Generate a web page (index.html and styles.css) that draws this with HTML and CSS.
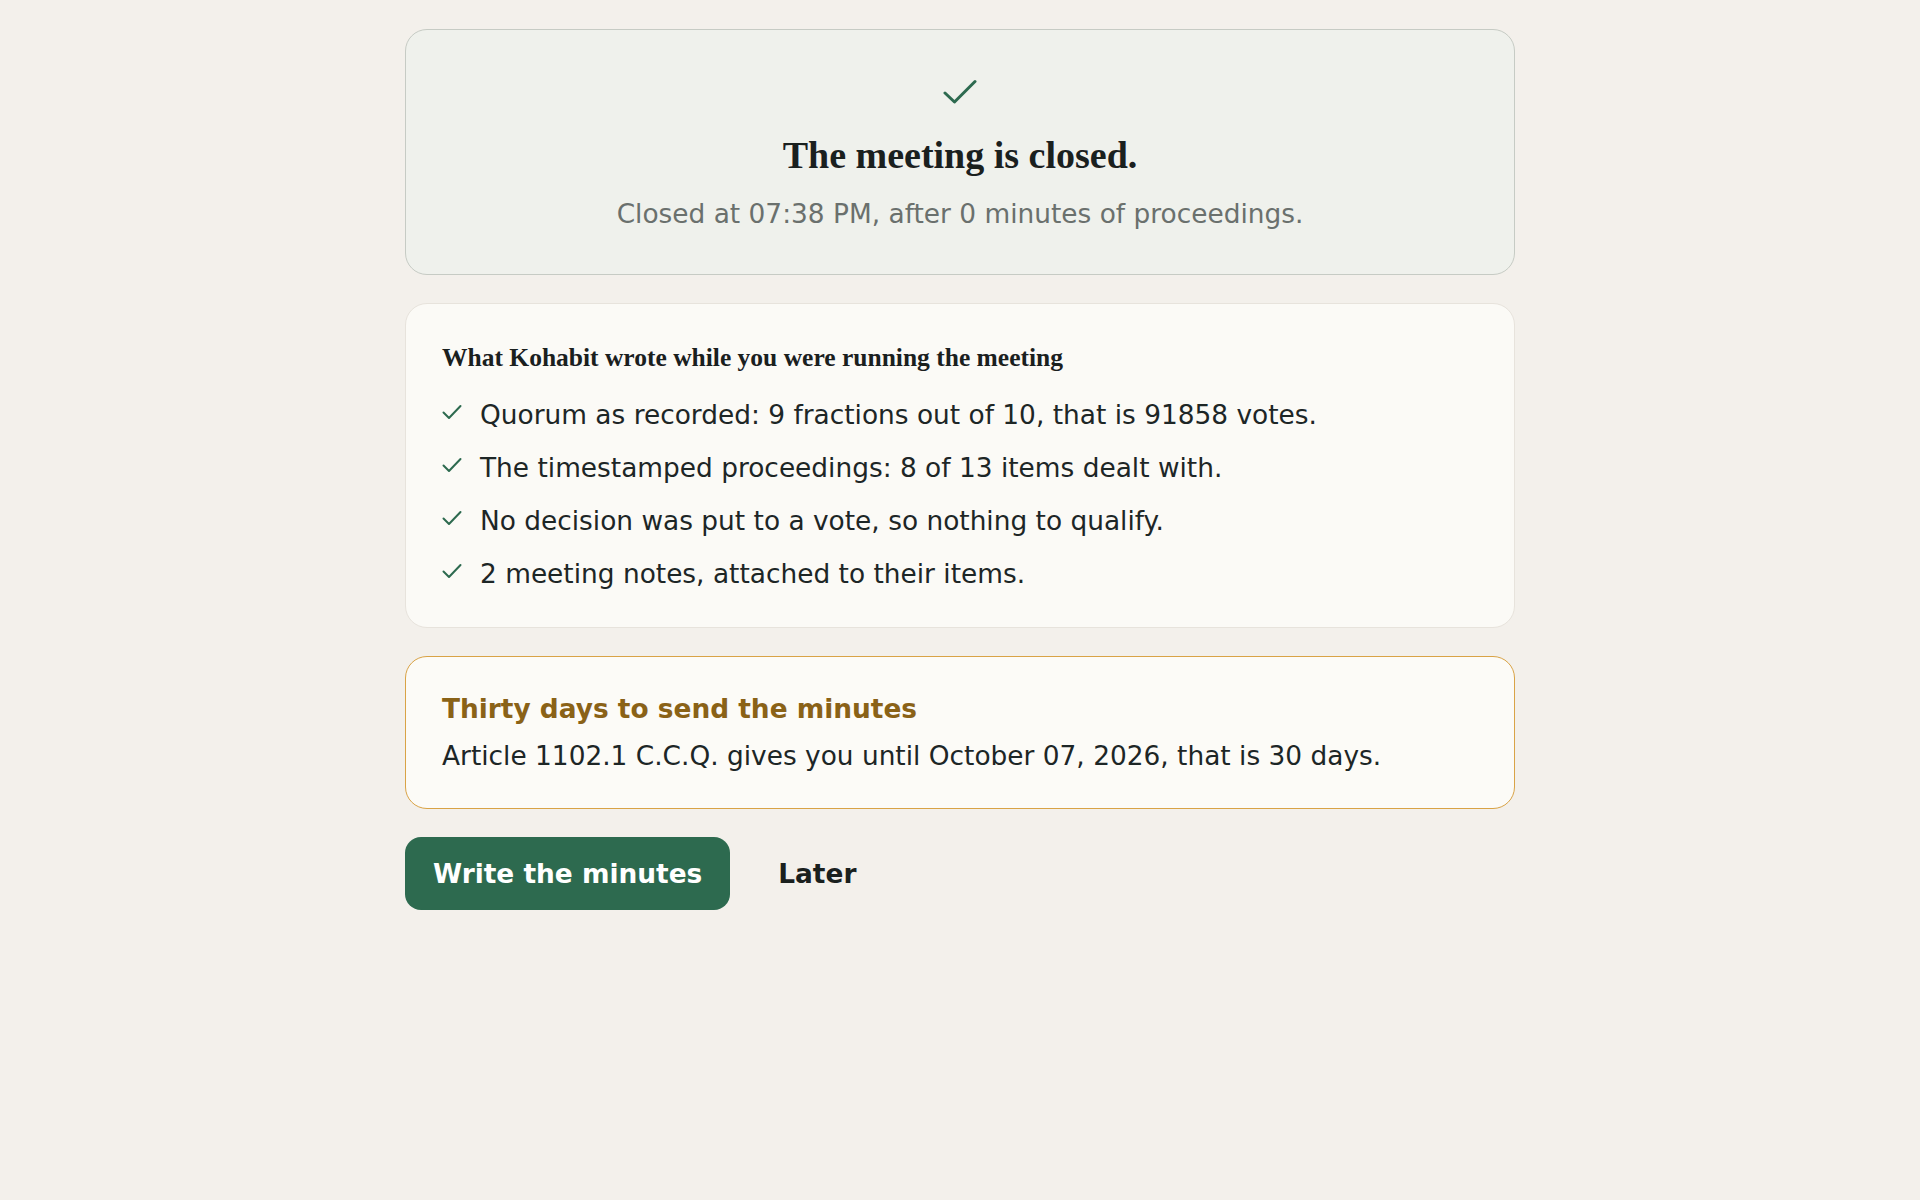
FILE: index.html
```html
<!DOCTYPE html>
<html lang="en">
<head>
<meta charset="utf-8">
<title>The meeting is closed</title>
<link rel="stylesheet" href="styles.css">
</head>
<body>
<main class="page">
  <section class="card card-closed">
    <svg class="big-check" viewBox="0 0 34 26" width="34" height="26" aria-hidden="true">
      <path d="M2 14 L11.5 23 L32 2.5" fill="none" stroke="#2d6a4f" stroke-width="3" stroke-linecap="round" stroke-linejoin="round"/>
    </svg>
    <h1 class="closed-title">The meeting is closed.</h1>
    <p class="closed-sub">Closed at 07:38 PM, after 0 minutes of proceedings.</p>
  </section>

  <section class="card card-summary">
    <h2 class="summary-title">What Kohabit wrote while you were running the meeting</h2>
    <ul class="checklist">
      <li class="check-item">
        <svg class="small-check" viewBox="0 0 20 16" width="20" height="16" aria-hidden="true"><path d="M1.5 8.5 L7 14 L18.5 2" fill="none" stroke="#2d6a4f" stroke-width="2" stroke-linecap="round" stroke-linejoin="round"/></svg>
        <span>Quorum as recorded: 9 fractions out of 10, that is 91858 votes.</span>
      </li>
      <li class="check-item">
        <svg class="small-check" viewBox="0 0 20 16" width="20" height="16" aria-hidden="true"><path d="M1.5 8.5 L7 14 L18.5 2" fill="none" stroke="#2d6a4f" stroke-width="2" stroke-linecap="round" stroke-linejoin="round"/></svg>
        <span>The timestamped proceedings: 8 of 13 items dealt with.</span>
      </li>
      <li class="check-item">
        <svg class="small-check" viewBox="0 0 20 16" width="20" height="16" aria-hidden="true"><path d="M1.5 8.5 L7 14 L18.5 2" fill="none" stroke="#2d6a4f" stroke-width="2" stroke-linecap="round" stroke-linejoin="round"/></svg>
        <span>No decision was put to a vote, so nothing to qualify.</span>
      </li>
      <li class="check-item">
        <svg class="small-check" viewBox="0 0 20 16" width="20" height="16" aria-hidden="true"><path d="M1.5 8.5 L7 14 L18.5 2" fill="none" stroke="#2d6a4f" stroke-width="2" stroke-linecap="round" stroke-linejoin="round"/></svg>
        <span>2 meeting notes, attached to their items.</span>
      </li>
    </ul>
  </section>

  <section class="card card-deadline">
    <h3 class="deadline-title">Thirty days to send the minutes</h3>
    <p class="deadline-text">Article 1102.1 C.C.Q. gives you until October 07, 2026, that is 30 days.</p>
  </section>

  <div class="actions">
    <button class="btn-primary" type="button">Write the minutes</button>
    <button class="btn-link" type="button">Later</button>
  </div>
</main>
</body>
</html>
```

FILE: styles.css
```css
html, body {
  margin: 0;
  padding: 0;
}

body {
  background: #f3f0eb;
  color: #1d2626;
  font-family: "DejaVu Sans", sans-serif;
  font-size: 26.4px;
}

.page {
  width: 1110px;
  margin: 29px auto 0;
  display: flex;
  flex-direction: column;
  gap: 28px;
}

.card {
  box-sizing: border-box;
  border-radius: 22px;
  border: 1px solid #e7e3dc;
  background: #fbfaf6;
}

.card-closed {
  background: #eff1ec;
  border-color: #c6cbc4;
  height: 246px;
  padding: 49px 40px 0;
  display: flex;
  flex-direction: column;
  align-items: center;
}

.big-check {
  display: block;
}

.closed-title {
  margin: 31px 0 0;
  font-family: "Liberation Serif", serif;
  font-weight: 700;
  font-size: 38px;
  line-height: 1;
  letter-spacing: 0;
  color: #1a201e;
}

.closed-sub {
  margin: 27px 0 0;
  font-size: 26.4px;
  line-height: 1;
  color: #6a706d;
}

.card-summary {
  padding: 39px 36px 34px;
}

.summary-title {
  margin: 0;
  font-family: "Liberation Serif", serif;
  font-weight: 700;
  font-size: 25.5px;
  line-height: 30px;
  color: #1a201e;
}

.checklist {
  list-style: none;
  margin: 22px 0 0;
  padding: 0;
  display: flex;
  flex-direction: column;
  gap: 14px;
}

.check-item {
  display: flex;
  align-items: center;
  gap: 18px;
  line-height: 39px;
}

.small-check {
  flex: none;
  margin-top: -6px;
}

.card-deadline {
  background: #fcfbf7;
  border: 1.5px solid #d9a346;
  padding: 36px 36px 36px;
}

.deadline-title {
  margin: 0;
  font-size: 26.4px;
  font-weight: 700;
  line-height: 32px;
  color: #8a6217;
}

.deadline-text {
  margin: 15px 0 0;
  line-height: 32px;
  color: #1d2626;
}

.actions {
  display: flex;
  align-items: center;
  gap: 48px;
  margin-top: 0;
}

.btn-primary {
  font-family: "DejaVu Sans", sans-serif;
  font-size: 26.4px;
  font-weight: 700;
  color: #ffffff;
  background: #2d6a4f;
  border: none;
  border-radius: 16px;
  height: 73px;
  padding: 0 28px;
  cursor: pointer;
}

.btn-link {
  font-family: "DejaVu Sans", sans-serif;
  font-size: 26.4px;
  font-weight: 700;
  color: #1a201e;
  background: none;
  border: none;
  padding: 0;
  cursor: pointer;
}
```
